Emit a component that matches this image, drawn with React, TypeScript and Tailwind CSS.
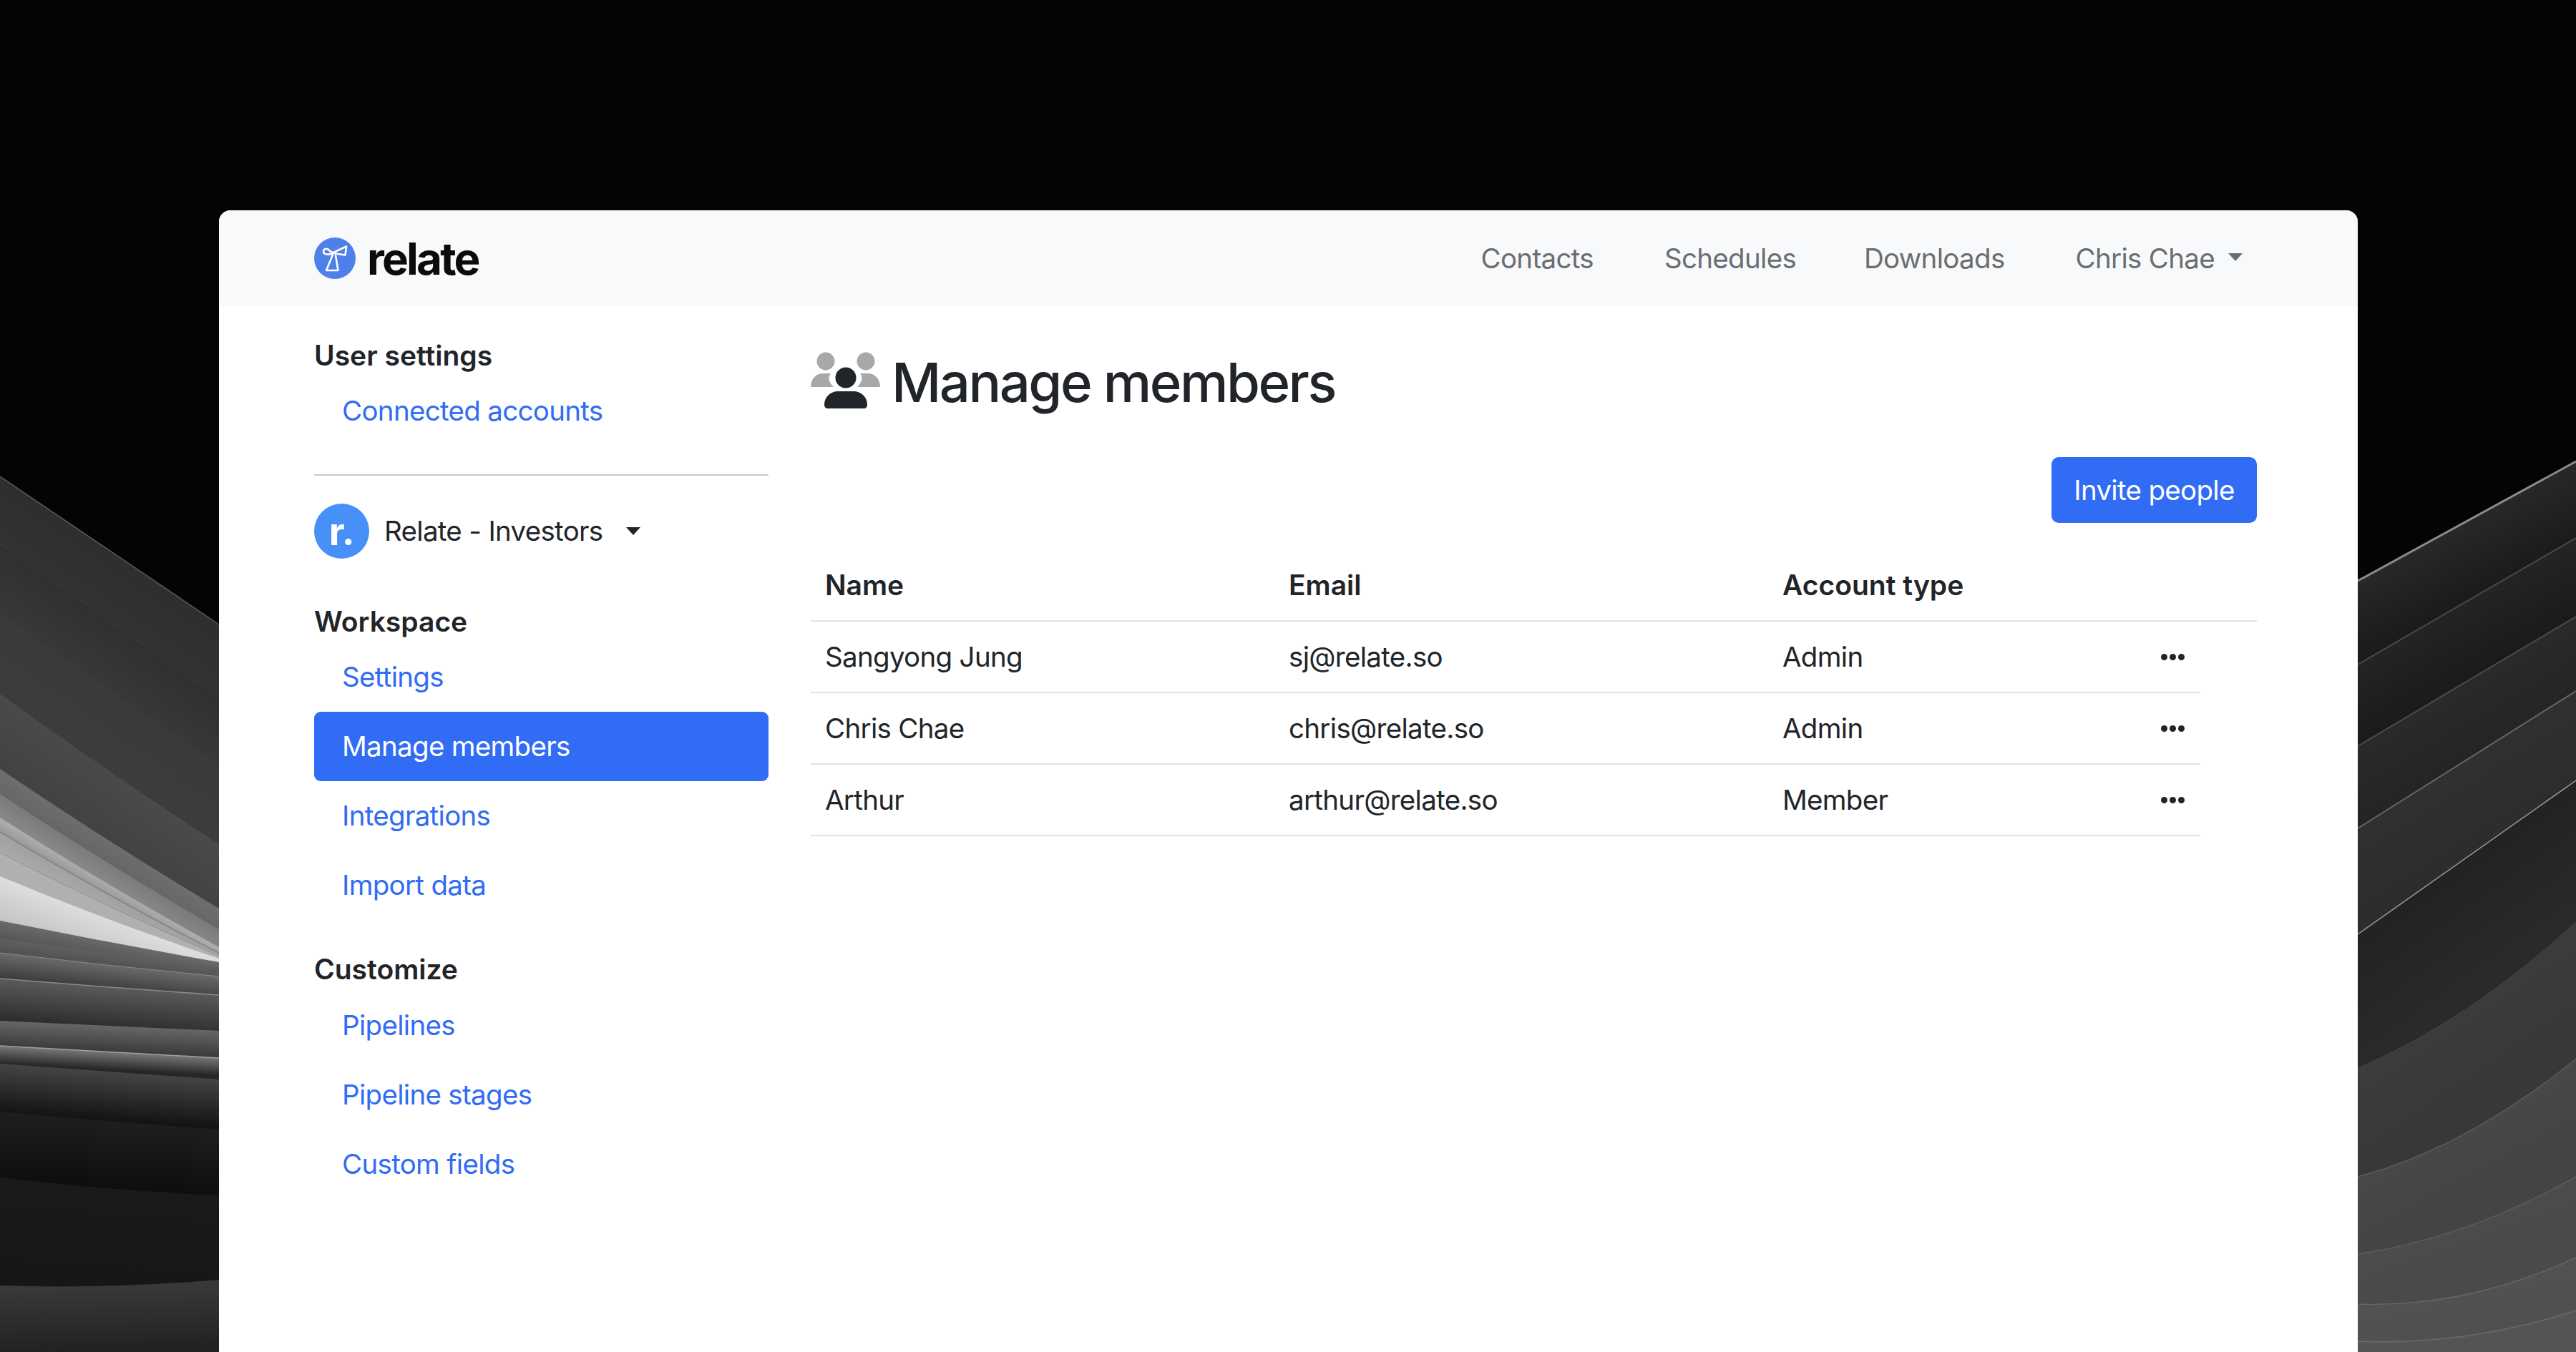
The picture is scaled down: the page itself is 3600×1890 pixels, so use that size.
import React from 'react';

const members = [
  { name: 'Sangyong Jung', email: 'sj@relate.so', type: 'Admin' },
  { name: 'Chris Chae', email: 'chris@relate.so', type: 'Admin' },
  { name: 'Arthur', email: 'arthur@relate.so', type: 'Member' },
];

// backdrop bands: a/b = edge height at x0 and x1, bow = curve of the edge
type Band = { a: number; b: number; bow?: number; top: string; bottom: string; edge?: string; w?: number };

const leftBands: Band[] = [
  { a: 666, b: 873, top: '#2e2e2e', bottom: '#323232', edge: '#5c5c5c', w: 1.5 },
  { a: 760, b: 976, top: '#303030', bottom: '#383838', edge: '#3c3c3c', w: 1 },
  { a: 857, b: 1069, bow: 2, top: '#3a3a3a', bottom: '#3c3c3c' },
  { a: 970, b: 1180, bow: 6, top: '#4a4a4a', bottom: '#424242' },
  { a: 1075, b: 1270, bow: 6, top: '#6e6e6e', bottom: '#666666' },
  { a: 1110, b: 1299, bow: 6, top: '#7a7a7a', bottom: '#888888' },
  { a: 1143, b: 1324, bow: 7, top: '#b0b0b0', bottom: '#989898' },
  { a: 1163, b: 1332, bow: 7, top: '#a0a0a0', bottom: '#aaaaaa', edge: '#808080', w: 1.5 },
  { a: 1192, b: 1336, bow: 6, top: '#b0b0b0', bottom: '#b0b0b0', edge: '#909090', w: 1 },
  { a: 1225, b: 1340, bow: 6, top: '#dedede', bottom: '#c4c4c4' },
  { a: 1287, b: 1345, bow: 2, top: '#6a6a6a', bottom: '#555555' },
  { a: 1312, b: 1352, bow: 2, top: '#606060', bottom: '#505050' },
  { a: 1332, b: 1365, bow: 2, top: '#6a6a6a', bottom: '#3a3a3a', edge: '#8a8a8a', w: 1 },
  { a: 1368, b: 1391, bow: 1, top: '#5a5a5a', bottom: '#2c2c2c', edge: '#8a8a8a', w: 1.5 },
  { a: 1427, b: 1441, bow: 0, top: '#666666', bottom: '#3c3c3c' },
  { a: 1462, b: 1479, bow: 0, top: '#777777', bottom: '#262626', edge: '#a0a0a0', w: 1.5 },
  { a: 1487, b: 1509, bow: 0, top: '#444444', bottom: '#141414' },
  { a: 1554, b: 1579, bow: 2, top: '#1e1e1e', bottom: '#0e0e0e' },
  { a: 1646, b: 1671, bow: 6, top: '#1a1a1a', bottom: '#161616' },
  { a: 1797, b: 1789, bow: 9, top: '#3a3a3a', bottom: '#222222' },
];

const rightBands: Band[] = [
  { a: 812, b: 645, top: '#282828', bottom: '#1a1a1a', edge: '#8a8a8a', w: 3 },
  { a: 929, b: 752, top: '#242424', bottom: '#1a1a1a', edge: '#4a4a4a', w: 2 },
  { a: 1043, b: 862, top: '#2a2a2a', bottom: '#242424', edge: '#4c4c4c', w: 2 },
  { a: 1158, b: 966, top: '#303030', bottom: '#2c2c2c', edge: '#666666', w: 2 },
  { a: 1306, b: 1091, top: '#222222', bottom: '#2a2a2a', edge: '#999999', w: 1.5 },
  { a: 1493, b: 1289, bow: 38, top: '#3c3c3c', bottom: '#383838', edge: '#444444', w: 1 },
  { a: 1645, b: 1480, bow: 42, top: '#484848', bottom: '#444444', edge: '#5c5c5c', w: 1.5 },
  { a: 1753, b: 1645, bow: 32, top: '#4c4c4c', bottom: '#4a4a4a', edge: '#5e5e5e', w: 1.5 },
  { a: 1823, b: 1758, bow: 38, top: '#525252', bottom: '#505050', edge: '#666666', w: 1.5 },
  { a: 1875, b: 1832, bow: 28, top: '#565656', bottom: '#545454', edge: '#6c6c6c', w: 1.5 },
];

const BandGroup = ({ bands, x0, x1, prefix }: { bands: Band[]; x0: number; x1: number; prefix: string }) => (
  <>
    {bands.map((band, i) => {
      const next = bands[i + 1] ? bands[i + 1].a : 1890;
      const slope = (band.b - band.a) / (x1 - x0);
      const t = (next - band.a) / (1 + slope * slope);
      const midX = (x0 + x1) / 2;
      const ctrlY = (band.a + band.b) / 2 + (band.bow || 0);
      const edge = `M${x0} ${band.a}Q${midX} ${ctrlY} ${x1} ${band.b}`;
      return (
        <g key={i}>
          <linearGradient
            id={`${prefix}${i}`}
            gradientUnits="userSpaceOnUse"
            x1={x0}
            y1={band.a}
            x2={x0 - slope * t}
            y2={band.a + t}
          >
            <stop offset="0" stopColor={band.top} />
            <stop offset="1" stopColor={band.bottom} />
          </linearGradient>
          <path d={`${edge}V1890H${x0}Z`} fill={`url(#${prefix}${i})`} />
          {band.edge && <path d={edge} fill="none" stroke={band.edge} strokeWidth={band.w} />}
        </g>
      );
    })}
  </>
);

const Backdrop = () => (
  <svg className="absolute inset-0" width="3600" height="1890" viewBox="0 0 3600 1890">
    <BandGroup bands={leftBands} x0={0} x1={306} prefix="l" />
    <BandGroup bands={rightBands} x0={3295} x1={3600} prefix="r" />
  </svg>
);

const Logo = () => (
  <svg width="58" height="58" viewBox="0 0 58 58">
    <circle cx="29" cy="29" r="29" fill="#4f80e9" />
    <g fill="none" stroke="#fff" strokeWidth="2.6" strokeLinejoin="round" strokeLinecap="round">
      <path d="M26 22C22 24 13 25 13 19.5C13 15 19 15 21 18C23 20 25 21 27 21L45 12.5L43.5 24.5L27 22" />
      <path d="M26 24L17 46H33.5L30 25" />
    </g>
  </svg>
);

const MembersIcon = () => (
  <svg width="97" height="81" viewBox="0 0 97 81">
    <circle cx="21" cy="15" r="12.5" fill="#a6a8aa" />
    <circle cx="77" cy="15" r="12.5" fill="#a6a8aa" />
    <path d="M0 51C0 39 8 32 17 32H28C23 38 26 45 32 51Z" fill="#a6a8aa" />
    <path d="M97 51C97 39 89 32 80 32H69C74 38 71 45 65 51Z" fill="#a6a8aa" />
    <circle cx="49" cy="38" r="14.5" fill="#212529" />
    <path d="M19 76C19 64 29 57 38 57H60C69 57 79 64 79 76C79 79 77 81 74 81H24C21 81 19 79 19 76Z" fill="#212529" />
  </svg>
);

const Dots = () => (
  <svg width="33" height="9" viewBox="0 0 33 9" className="block">
    <circle cx="4.5" cy="4.5" r="4.5" fill="#212529" />
    <circle cx="16.5" cy="4.5" r="4.5" fill="#212529" />
    <circle cx="28.5" cy="4.5" r="4.5" fill="#212529" />
  </svg>
);

const SideLink = ({ label, active }: { label: string; active?: boolean }) => (
  <a
    className={
      active
        ? 'flex h-[97px] items-center rounded-[9px] bg-[#316cf4] pl-[39px] text-white'
        : 'flex h-[97px] items-center pl-[39px] text-[#316cf4]'
    }
  >
    {label}
  </a>
);

const SideHeading = ({ label, className }: { label: string; className: string }) => (
  <div className={`h-[55px] text-[39px] font-semibold leading-[55px] tracking-normal ${className}`}>{label}</div>
);

export default function App() {
  return (
    <div className="relative h-[1890px] w-[3600px] overflow-hidden bg-[#040404] px-[306px] pt-[294px] text-[38.5px] leading-[55px] tracking-[-0.018em] text-[#212529] [font-family:Inter,sans-serif]">
      <Backdrop />
      <div className="relative h-[1596px] w-[2989px] overflow-hidden rounded-t-[16px] bg-white">
        <header className="flex h-[134px] items-center justify-between bg-[#f8f9fa] pl-[133px] pr-[161px]">
          <div className="flex items-center gap-[16px]">
            <Logo />
            <span className="text-[62px] font-bold leading-[65px] tracking-[-0.045em] text-[#0b0b0b]">relate</span>
          </div>
          <nav className="flex items-center text-[#6b6e71]">
            <a>Contacts</a>
            <a className="ml-[99px]">Schedules</a>
            <a className="ml-[95px]">Downloads</a>
            <a className="ml-[99px]">Chris Chae</a>
            <span className="mb-[4px] ml-[19px] h-0 w-0 border-x-[10px] border-t-[11px] border-x-transparent border-t-[#6b6e71]" />
          </nav>
        </header>

        <div className="flex pl-[133px]">
          <aside className="w-[635px] pt-[41px]">
            <SideHeading label="User settings" className="mb-[2px]" />
            <SideLink label="Connected accounts" />
            <div className="mt-[40px] h-[2px] bg-[#cbcbcb]" />
            <div className="mt-[39px] flex h-[77px] items-center">
              <div className="flex h-[77px] w-[77px] items-center justify-center rounded-full bg-[#4690f8] text-[54px] font-bold text-white">
                r.
              </div>
              <span className="ml-[21px]">Relate - Investors</span>
              <span className="ml-[33px] h-0 w-0 border-x-[10px] border-t-[11px] border-x-transparent border-t-[#212529]" />
            </div>
            <SideHeading label="Workspace" className="mt-[60px] mb-[2px]" />
            <SideLink label="Settings" />
            <SideLink label="Manage members" active />
            <SideLink label="Integrations" />
            <SideLink label="Import data" />
            <SideHeading label="Customize" className="mt-[41px] mb-[3px]" />
            <SideLink label="Pipelines" />
            <SideLink label="Pipeline stages" />
            <SideLink label="Custom fields" />
          </aside>

          <main className="ml-[59px] w-[2021px] pt-[62px]">
            <div className="flex h-[81px] items-center gap-[16px]">
              <MembersIcon />
              <h1 className="mt-[8px] text-[76px] font-medium leading-[81px] tracking-[-0.033em]">Manage members</h1>
            </div>
            <div className="mt-[68px] flex justify-end">
              <button className="h-[92px] w-[287px] rounded-[10px] bg-[#316cf4] text-white">Invite people</button>
            </div>
            <table className="mt-[36px] w-full table-fixed border-collapse text-left">
              <colgroup>
                <col className="w-[648px]" />
                <col className="w-[690px]" />
                <col className="w-[504px]" />
                <col className="w-[100px]" />
                <col className="w-[79px]" />
              </colgroup>
              <thead>
                <tr className="h-[101px] border-b-2 border-[#dee2e6] text-[39px] tracking-normal">
                  <th className="pl-[20px] font-semibold">Name</th>
                  <th className="pl-[20px] font-semibold">Email</th>
                  <th className="pl-[20px] font-semibold">Account type</th>
                  <th />
                  <th />
                </tr>
              </thead>
              <tbody>
                {members.map(m => (
                  <tr key={m.email} className="h-[100px]">
                    <td className="border-b-2 border-[#dee2e6] pl-[20px]">{m.name}</td>
                    <td className="border-b-2 border-[#dee2e6] pl-[20px]">{m.email}</td>
                    <td className="border-b-2 border-[#dee2e6] pl-[20px]">{m.type}</td>
                    <td className="border-b-2 border-[#dee2e6] pl-[45px]">
                      <Dots />
                    </td>
                    <td />
                  </tr>
                ))}
              </tbody>
            </table>
          </main>
        </div>
      </div>
    </div>
  );
}
